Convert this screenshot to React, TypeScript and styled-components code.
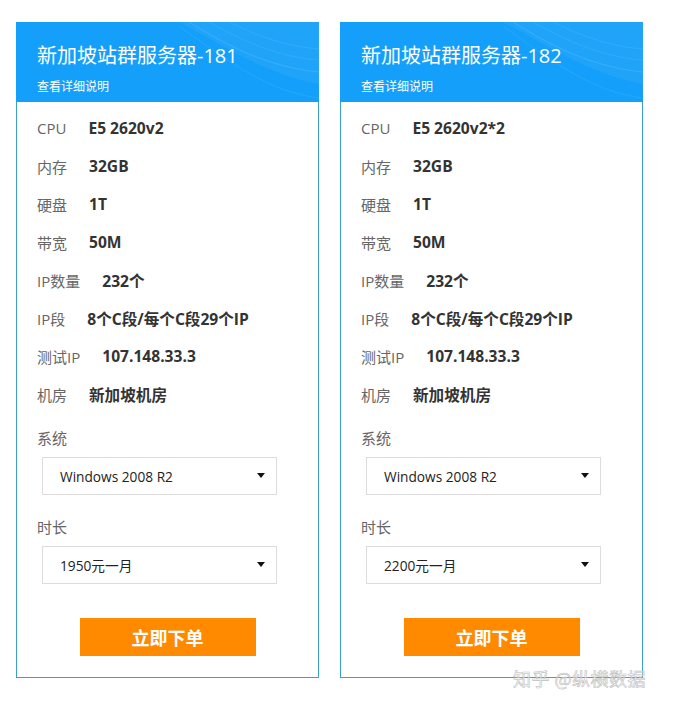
import React from "react";
import styled, {createGlobalStyle} from "styled-components";

const GlobalStyle = createGlobalStyle`
  body {
    margin: 0;
    background: #fff;
    font-family: "Open Sans", "Noto Sans CJK SC", sans-serif;
  }
`;

const Page = styled.div`
  position: relative;
  width: 673px;
  height: 705px;
  box-sizing: border-box;
  padding: 22px 0 0 16px;
  display: flex;
  gap: 21px;
  align-items: flex-start;
`;

const Card = styled.div`
  width: 303px;
  box-sizing: border-box;
  border: 1px solid #3aa3c4;
  border-top: none;
  background: #fff;
`;

const Header = styled.div`
  position: relative;
  overflow: hidden;
  height: 80px;
  margin: 0 -1px;
  box-sizing: border-box;
  padding: 21px 0 0 21px;
  color: #fff;
  background: #14a0fa;
`;

const Shine = styled.svg`
  position: absolute;
  right: 0;
  top: 0;
`;

const Title = styled.div`
  position: relative;
  font-size: 20px;
  line-height: 26px;
  font-weight: 400;
`;

const Sub = styled.div`
  position: relative;
  margin-top: 9px;
  font-size: 12px;
  line-height: 18px;
`;

const Body = styled.div`
  padding: 7px 0 21px 20px;
  display: flex;
  flex-direction: column;
`;

const Row = styled.div`
  display: flex;
  align-items: center;
  height: 38px;
`;

const Label = styled.span`
  color: #666;
  font-size: 15px;
  margin-right: 22px;
`;

const Value = styled.span`
  color: #333;
  font-size: 15.6px;
  font-weight: 700;
`;

const FieldLabel = styled.div<{ $top: number }>`
  margin-top: ${p => p.$top}px;
  font-size: 15px;
  line-height: 20px;
  color: #666;
`;

const Select = styled.div`
  position: relative;
  margin: 9px 0 0 5px;
  width: 235px;
  height: 38px;
  box-sizing: border-box;
  border: 1px solid #dcdcdc;
  padding-left: 17px;
  display: flex;
  align-items: center;
  font-size: 13.7px;
  color: #222;
`;

const Caret = styled.span`
  position: absolute;
  right: 11px;
  top: 15px;
  width: 0;
  height: 0;
  border-left: 4px solid transparent;
  border-right: 4px solid transparent;
  border-top: 5px solid #111;
`;

const Button = styled.button`
  align-self: center;
  margin: 34px 20px 0 0;
  width: 176px;
  height: 38px;
  border: none;
  background: #ff8a00;
  color: #fff;
  font-family: "Noto Sans CJK SC", sans-serif;
  font-size: 18px;
  font-weight: 700;
  cursor: pointer;
`;

const Watermark = styled.div`
  position: absolute;
  left: 513px;
  top: 666px;
  font-family: "Noto Sans CJK SC", sans-serif;
  font-size: 18px;
  line-height: 24px;
  color: rgba(255, 255, 255, 0.6);
  -webkit-text-stroke: 0.6px #bdbdbd;
  letter-spacing: 0.5px;
`;

type Server = {
  name: string;
  cpu: string;
  price: string;
};

const servers: Server[] = [
  {name: "新加坡站群服务器-181", cpu: "E5 2620v2", price: "1950元一月"},
  {name: "新加坡站群服务器-182", cpu: "E5 2620v2*2", price: "2200元一月"},
];

const ServerCard: React.FC<{ server: Server }> = ({server}) => {
  const specs: [string, string][] = [
    ["CPU", server.cpu],
    ["内存", "32GB"],
    ["硬盘", "1T"],
    ["带宽", "50M"],
    ["IP数量", "232个"],
    ["IP段", "8个C段/每个C段29个IP"],
    ["测试IP", "107.148.33.3"],
    ["机房", "新加坡机房"],
  ];
  return <Card>
    <Header>
      <Shine width="140" height="80" viewBox="0 0 140 80">
        <path d="M0 0 C40 20 80 50 140 62 L140 0 Z" fill="rgba(255,255,255,0.05)"/>
        <path d="M10 0 C50 25 90 45 140 50" stroke="rgba(255,255,255,0.12)" fill="none"/>
        <path d="M30 0 C65 20 100 35 140 38" stroke="rgba(255,255,255,0.08)" fill="none"/>
        <path d="M50 0 C80 15 110 25 140 27" stroke="rgba(255,255,255,0.08)" fill="none"/>
        <path d="M0 4 C50 40 90 70 140 76" stroke="rgba(255,255,255,0.07)" fill="none"/>
      </Shine>
      <Title>{server.name}</Title>
      <Sub>查看详细说明</Sub>
    </Header>
    <Body>
      {specs.map(([k, v]) => <Row key={k}>
        <Label>{k}</Label>
        <Value>{v}</Value>
      </Row>)}
      <FieldLabel $top={15}>系统</FieldLabel>
      <Select>Windows 2008 R2<Caret/></Select>
      <FieldLabel $top={22}>时长</FieldLabel>
      <Select>{server.price}<Caret/></Select>
      <Button>立即下单</Button>
    </Body>
  </Card>;
};

export default function App() {
  return <>
    <GlobalStyle/>
    <Page>
      {servers.map(s => <ServerCard key={s.name} server={s}/>)}
      <Watermark>知乎 @纵横数据</Watermark>
    </Page>
  </>;
}
